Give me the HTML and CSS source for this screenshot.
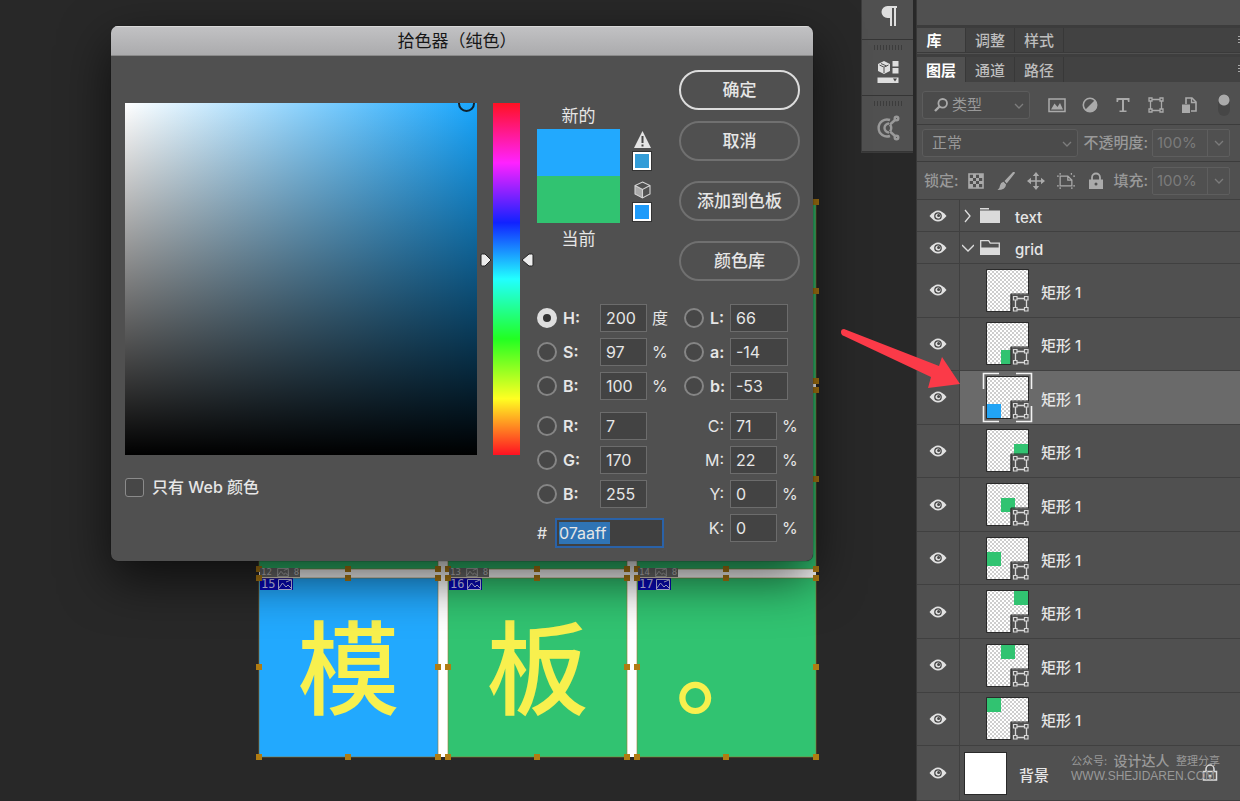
FILE: index.html
```html
<!DOCTYPE html>
<html lang="zh-CN">
<head>
<meta charset="utf-8">
<title>拾色器（纯色）</title>
<link rel="stylesheet" href="styles.css">
</head>
<body>
<svg class="defs" aria-hidden="true">
  <defs>
    <pattern id="checker" width="4" height="4" patternUnits="userSpaceOnUse">
      <rect width="4" height="4" fill="#fff"/><path d="M0 0h2v2H0zM2 2h2v2H2z" fill="#cdcdcd"/>
    </pattern>
    <symbol id="eye" viewBox="0 0 18 12">
      <path d="M.5 6Q5 .5 9 .5T17.500 6Q13 11.500 9 11.500T.5 6Z" fill="#e2e2e2"/>
      <circle cx="9" cy="6" r="3.200" fill="#e2e2e2" stroke="#484848" stroke-width="1.300"/><circle cx="9.600" cy="5.400" r="1.500" fill="#484848"/>
    </symbol>
    <symbol id="shape-thumb" viewBox="0 0 43 43">
      <path d="M24.500 43V25.500H43V43Z" fill="#505050"/>
      <path d="M.5 .5H42.500V25H25V42.500H.5Z" fill="none" stroke="#2a2a2a"/>
      <path d="M29.500 31v8M40.500 31v8M31 29.500h8M31 40.500h8" stroke="#d8d8d8" stroke-width="1.300"/>
      <path d="M27.500 27.500h3.500v3.500h-3.500zM38.500 27.500H42v3.500h-3.500zM27.500 38.500h3.500V42h-3.500zM38.500 38.500H42V42h-3.500z" fill="#505050" stroke="#d8d8d8" stroke-width="1.200"/>
    </symbol>
    <symbol id="down" viewBox="0 0 10 6"><path d="M1 1l4 4 4-4" fill="none" stroke="currentColor" stroke-width="1.300"/></symbol>
    <symbol id="handles" viewBox="-4 -4 187 187">
      <path d="M0 0H179V179H0Z" fill="none" stroke="#9a7a30" stroke-opacity=".6"/>
      <path d="M-3-3h6v6h-6zM86-3h6v6h-6zM176-3h6v6h-6zM-3 86h6v6h-6zM176 86h6v6h-6zM-3 176h6v6h-6zM86 176h6v6h-6zM176 176h6v6h-6z" fill="#b07c12"/>
    </symbol>
    <symbol id="slice" viewBox="0 0 14 11">
      <path d="M.5.5h13v10H.5zM1 9l3.500-5L8 8l2-2 3 3M8 3l5-2" fill="none" stroke="currentColor"/>
    </symbol>
  </defs>
</svg>

<main class="workspace">
  <div class="artboard">
    <div class="cell"><svg class="handles"><use href="#handles"/></svg></div>
    <div class="cell"><svg class="handles"><use href="#handles"/></svg></div>
    <div class="cell"><svg class="handles"><use href="#handles"/></svg></div>
    <div class="cell"><svg class="handles"><use href="#handles"/></svg></div>
    <div class="cell"><svg class="handles"><use href="#handles"/></svg></div>
    <div class="cell"><svg class="handles"><use href="#handles"/></svg></div>
    <div class="cell blue">模<span class="tag auto">12<svg><use href="#slice"/></svg>8</span><span class="tag">15<svg><use href="#slice"/></svg></span><svg class="handles"><use href="#handles"/></svg></div>
    <div class="cell">板<span class="tag auto">13<svg><use href="#slice"/></svg>8</span><span class="tag">16<svg><use href="#slice"/></svg></span><svg class="handles"><use href="#handles"/></svg></div>
    <div class="cell">。<span class="tag auto">14<svg><use href="#slice"/></svg>8</span><span class="tag">17<svg><use href="#slice"/></svg></span><svg class="handles"><use href="#handles"/></svg></div>
  </div>

  <form class="dialog" role="dialog" aria-labelledby="dlg-title">
    <h1 class="titlebar" id="dlg-title">拾色器（纯色）</h1>
    <div class="dialog-body">
      <div class="field-col">
        <div class="field"><span class="cursor"></span></div>
        <label class="web"><input type="checkbox"><span>只有 Web 颜色</span></label>
      </div>
      <div class="hue">
        <svg class="slider" viewBox="0 0 55 14">
          <path d="M2 2Q2 1 3.500 1H6L12 7 6 13H3.500Q2 13 2 12Z" fill="#ededed" stroke="#222"/>
          <path d="M54 2Q54 1 52.500 1H50L43 7 50 13H52.500Q54 13 54 12Z" fill="#ededed" stroke="#222"/>
        </svg>
      </div>
      <div class="controls">
        <div class="top">
          <div class="preview">
            <span>新的</span>
            <div class="swatches"><i class="new"></i><i class="cur"></i></div>
            <span>当前</span>
          </div>
          <div class="warnings">
            <svg class="warn" viewBox="0 0 17 17"><path d="M8.500 0L17 17H0Z" fill="#e4e4e4"/><path d="M8.500 5v7M8.500 13.500v2" stroke="#444" stroke-width="2"/></svg>
            <button type="button" class="chip gamut" aria-label="色域内颜色"></button>
            <svg class="cube" viewBox="0 0 17 18"><path d="M8.500 8.500L16 4.500V13L8.500 17Z" fill="#505050"/><path d="M1 4.500L8.500 8.500 16 4.500 8.500 1Z" fill="#505050"/><path d="M1 4.500L8.500 8.500V17L1 13Z" fill="#aaa"/><path d="M8.500 1L16 4.500V13L8.500 17 1 13V4.500ZM1 4.500L8.500 8.500 16 4.500M8.500 8.500V17" fill="none" stroke="#d4d4d4" stroke-width="1.100"/></svg>
            <button type="button" class="chip websafe" aria-label="Web 安全颜色"></button>
          </div>
          <div class="buttons">
            <button type="submit" class="pill primary">确定</button>
            <button type="button" class="pill">取消</button>
            <button type="button" class="pill far">添加到色板</button>
            <button type="button" class="pill far">颜色库</button>
          </div>
        </div>
        <div class="values">
          <div class="group">
            <div class="row"><label class="pick"><input type="radio" name="ch" checked>H:</label><input class="num" aria-label="H" value="200"><span>度</span></div>
            <div class="row"><label class="pick"><input type="radio" name="ch">S:</label><input class="num" aria-label="S" value="97"><span>%</span></div>
            <div class="row"><label class="pick"><input type="radio" name="ch">B:</label><input class="num" aria-label="B" value="100"><span>%</span></div>
            <div class="row split"><label class="pick"><input type="radio" name="ch">R:</label><input class="num" aria-label="R" value="7"></div>
            <div class="row"><label class="pick"><input type="radio" name="ch">G:</label><input class="num" aria-label="G" value="170"></div>
            <div class="row"><label class="pick"><input type="radio" name="ch">B:</label><input class="num" aria-label="B" value="255"></div>
            <div class="row hexrow"><label for="hex">#</label><div class="hexbox"><input id="hex" value="07aaff"></div></div>
          </div>
          <div class="group right">
            <div class="row"><label class="pick"><input type="radio" name="ch">L:</label><input class="num wide" aria-label="L" value="66"></div>
            <div class="row"><label class="pick"><input type="radio" name="ch">a:</label><input class="num wide" aria-label="a" value="-14"></div>
            <div class="row"><label class="pick"><input type="radio" name="ch">b:</label><input class="num wide" aria-label="b" value="-53"></div>
            <div class="row split"><label class="ink" for="c">C:</label><input class="num" id="c" value="71"><span>%</span></div>
            <div class="row"><label class="ink" for="m">M:</label><input class="num" id="m" value="22"><span>%</span></div>
            <div class="row"><label class="ink" for="y">Y:</label><input class="num" id="y" value="0"><span>%</span></div>
            <div class="row"><label class="ink" for="k">K:</label><input class="num" id="k" value="0"><span>%</span></div>
          </div>
        </div>
      </div>
    </div>
  </form>
</main>

<nav class="strip">
  <button class="tool first" aria-label="段落"><svg width="18" height="22" viewBox="0 0 18 22"><path d="M17 1H7.500a6 6 0 0 0 0 12H10V21h2V3h2V21h2V3h1z" fill="#dedede"/></svg></button>
  <button class="tool" aria-label="库"><i class="grip"></i><svg width="22" height="24" viewBox="0 0 22 24"><path d="M7 1l6 3v7l-6 3-6-3V4z" fill="#dedede"/><path d="M2.500 5L7 7.200 11.500 5M7 7.500V13M4 3.500L9.500 6" fill="none" stroke="#505050"/><path d="M15.500 1h6v5.500h-6zM15.500 8h6v5.500h-6zM.5 17.500h21V23H.5z" fill="#dedede"/><path d="M16 18.500h4l-2 3z" fill="#444"/></svg></button>
  <button class="tool" aria-label="扩展"><i class="grip"></i><svg width="24" height="26" viewBox="0 0 24 26" fill="none" stroke="#999" stroke-width="2.400"><path d="M14 5A8.500 8.500 0 1 0 14 21M13 8.500a4.500 4.500 0 1 0 0 9M14 9.500l5-4.500M14 16.500l5 4.500M14 9.500q2.500 3.500 0 7"/><circle cx="20.500" cy="3.500" r="1.800"/><circle cx="20.500" cy="22.500" r="1.800"/></svg></button>
</nav>

<aside class="panel">
  <div class="blank"></div>
  <div class="tabs"><button class="tab on">库</button><button class="tab">调整</button><button class="tab">样式</button><i class="menu"></i></div>
  <div class="tabs lower"><button class="tab on">图层</button><button class="tab">通道</button><button class="tab">路径</button><i class="menu"></i></div>
  <div class="bar filter">
    <div class="combo kind"><svg class="search" viewBox="0 0 14 14"><circle cx="8.700" cy="5.300" r="4.300" fill="none" stroke="#aaa" stroke-width="1.800"/><path d="M5.500 8.500L1 13" stroke="#aaa" stroke-width="2.400"/></svg><select aria-label="筛选"><option>类型</option></select><svg class="caret"><use href="#down"/></svg></div>
    <div class="filters">
      <button aria-label="像素图层"><svg viewBox="0 0 18 18"><path d="M1 3h16v12.500H1z" fill="none" stroke="#aaa" stroke-width="1.500"/><path d="M3 13.500l3.500-6 3 3.500L12 7l3 6.500z" fill="#aaa"/></svg></button>
      <button aria-label="调整图层"><svg viewBox="0 0 18 18"><circle cx="9" cy="9" r="6.700" fill="none" stroke="#aaa" stroke-width="1.600"/><path d="M14 4L4 14A7 7 0 1 0 14 4Z" fill="#aaa"/></svg></button>
      <button aria-label="文字图层"><svg viewBox="0 0 18 18"><path d="M2.500 2h13v4h-1.500L13.500 4H10v10.500h2.500V16h-7v-1.500H8V4H4.500L4 6H2.500z" fill="#aaa"/></svg></button>
      <button aria-label="形状图层"><svg viewBox="0 0 18 18" fill="none" stroke="#aaa" stroke-width="1.300"><path d="M3.500 5v8M14.500 5v8M5 3.500h8M5 14.500h8"/><path d="M2 2h3v3H2zM13 2h3v3h-3zM2 13h3v3H2zM13 13h3v3h-3z"/></svg></button>
      <button aria-label="智能对象"><svg viewBox="0 0 18 18"><path d="M6 8V2H12l4 4v9h-5" fill="none" stroke="#aaa" stroke-width="1.600"/><path d="M11.500 2v4.500H16" fill="none" stroke="#aaa" stroke-width="1.300"/><path d="M2 8.500h8V17H2z" fill="#aaa"/></svg></button>
    </div>
    <button class="toggle" aria-label="打开或关闭图层过滤"></button>
  </div>
  <div class="bar">
    <div class="combo blend dim"><select aria-label="混合模式"><option>正常</option></select><svg class="caret"><use href="#down"/></svg></div>
    <label class="caption" for="opacity">不透明度:</label>
    <div class="percent"><input id="opacity" value="100%"><button aria-label="不透明度滑块"><svg><use href="#down"/></svg></button></div>
  </div>
  <div class="bar lock">
    <span class="caption">锁定:</span>
    <div class="locks">
      <button aria-label="透明像素"><svg viewBox="0 0 18 18"><path d="M2 2h14v14H2z" fill="none" stroke="#aaa" stroke-width="1.600"/><path d="M6 2h3v4H6zM2 6h4v3H2zM9 6h3v3H9zM6 9h3v3H6zM12 2h4v4h-4zM12 9h4v3h-4zM2 12h4v4H2zM9 12h3v4H9z" fill="#aaa"/></svg></button>
      <button aria-label="图像像素"><svg viewBox="0 0 18 18"><path d="M17.500 0L16 0 7.500 9 9.700 11.500 18 1ZM6.500 9.800l2.600 2.600Q8.500 18 0.500 18 3 16 3 13.500 3.500 10.500 6.500 9.800Z" fill="#aaa"/></svg></button>
      <button aria-label="位置"><svg viewBox="0 0 18 18"><path d="M9 2v14M2 9h14" stroke="#aaa" stroke-width="1.600"/><path d="M9 0l3.200 4H5.800zM9 18l3.200-4H5.800zM0 9l4-3.200v6.400zM18 9l-4-3.200v6.400z" fill="#aaa"/></svg></button>
      <button aria-label="画板嵌套"><svg viewBox="0 0 20 18"><path d="M0 3.500h2M3.500 0v2M3.500 3.500v11h13V8L12 3.500zM12 3.500V8h4.500M16 0v2M18 3.500h2M0 14.500h2M3.500 16v2M16.500 16v2M18 14.500h2" fill="none" stroke="#aaa" stroke-width="1.400"/></svg></button>
      <button aria-label="全部锁定"><svg viewBox="0 0 18 18"><path d="M5 8V5.500a4 4 0 0 1 8 0V8" fill="none" stroke="#aaa" stroke-width="1.800"/><path d="M2 7.500h14V17H2z" fill="#aaa"/><circle cx="9" cy="12" r="1.500" fill="#505050"/></svg></button>
    </div>
    <label class="caption" for="fill">填充:</label>
    <div class="percent"><input id="fill" value="100%"><button aria-label="填充滑块"><svg><use href="#down"/></svg></button></div>
  </div>
  <ul class="layers">
    <li class="layer folder"><button class="vis" aria-label="可见"><svg><use href="#eye"/></svg></button><div class="info"><svg class="twist" viewBox="0 0 12 14"><path d="M3 1l5 6-5 6" fill="none" stroke="#ddd" stroke-width="1.300"/></svg><svg class="dir" viewBox="0 0 20 16"><path d="M0 0h9v1.500H0zM0 2.500h20V15H0z" fill="#dadada"/></svg><span>text</span></div></li>
    <li class="layer folder"><button class="vis" aria-label="可见"><svg><use href="#eye"/></svg></button><div class="info"><svg class="twist" viewBox="0 0 12 14"><path d="M0 4l6 6 6-6" fill="none" stroke="#ddd" stroke-width="1.300"/></svg><svg class="dir" viewBox="0 0 20 16"><path d="M.7 14V.7h8l1.500 2.500h9.100V14" fill="none" stroke="#dadada" stroke-width="1.300"/><path d="M0 7.500h20V15H0z" fill="#dadada"/></svg><span>grid</span></div></li>
    <li class="layer"><button class="vis" aria-label="可见"><svg><use href="#eye"/></svg></button><div class="info shape"><svg class="thumb" viewBox="0 0 43 43"><path d="M1 1h41v41H1z" fill="url(#checker)"/><use href="#shape-thumb"/></svg><span>矩形 1</span></div></li>
    <li class="layer"><button class="vis" aria-label="可见"><svg><use href="#eye"/></svg></button><div class="info shape"><svg class="thumb" viewBox="0 0 43 43"><path d="M1 1h41v41H1z" fill="url(#checker)"/><path d="M15 28h14v14H15z" fill="#31c371"/><use href="#shape-thumb"/></svg><span>矩形 1</span></div></li>
    <li class="layer selected"><button class="vis" aria-label="可见"><svg><use href="#eye"/></svg></button><div class="info shape"><svg class="thumb" viewBox="0 0 43 43"><path d="M1 1h41v41H1z" fill="url(#checker)"/><path d="M1 28h14v14H1z" fill="#22a4f5"/><use href="#shape-thumb"/><path d="M-2.500 13V-2.500H13M30-2.500H45.500V13M45.500 30V45.500H30M13 45.500H-2.500V30" fill="none" stroke="#f2f2f2" stroke-width="1.600"/></svg><span>矩形 1</span></div></li>
    <li class="layer"><button class="vis" aria-label="可见"><svg><use href="#eye"/></svg></button><div class="info shape"><svg class="thumb" viewBox="0 0 43 43"><path d="M1 1h41v41H1z" fill="url(#checker)"/><path d="M28 15h14v14H28z" fill="#31c371"/><use href="#shape-thumb"/></svg><span>矩形 1</span></div></li>
    <li class="layer"><button class="vis" aria-label="可见"><svg><use href="#eye"/></svg></button><div class="info shape"><svg class="thumb" viewBox="0 0 43 43"><path d="M1 1h41v41H1z" fill="url(#checker)"/><path d="M15 15h14v14H15z" fill="#31c371"/><use href="#shape-thumb"/></svg><span>矩形 1</span></div></li>
    <li class="layer"><button class="vis" aria-label="可见"><svg><use href="#eye"/></svg></button><div class="info shape"><svg class="thumb" viewBox="0 0 43 43"><path d="M1 1h41v41H1z" fill="url(#checker)"/><path d="M1 15h14v14H1z" fill="#31c371"/><use href="#shape-thumb"/></svg><span>矩形 1</span></div></li>
    <li class="layer"><button class="vis" aria-label="可见"><svg><use href="#eye"/></svg></button><div class="info shape"><svg class="thumb" viewBox="0 0 43 43"><path d="M1 1h41v41H1z" fill="url(#checker)"/><path d="M28 1h14v14H28z" fill="#31c371"/><use href="#shape-thumb"/></svg><span>矩形 1</span></div></li>
    <li class="layer"><button class="vis" aria-label="可见"><svg><use href="#eye"/></svg></button><div class="info shape"><svg class="thumb" viewBox="0 0 43 43"><path d="M1 1h41v41H1z" fill="url(#checker)"/><path d="M15 1h14v14H15z" fill="#31c371"/><use href="#shape-thumb"/></svg><span>矩形 1</span></div></li>
    <li class="layer"><button class="vis" aria-label="可见"><svg><use href="#eye"/></svg></button><div class="info shape"><svg class="thumb" viewBox="0 0 43 43"><path d="M1 1h41v41H1z" fill="url(#checker)"/><path d="M1 1h14v14H1z" fill="#31c371"/><use href="#shape-thumb"/></svg><span>矩形 1</span></div></li>
    <li class="layer base"><button class="vis" aria-label="可见"><svg><use href="#eye"/></svg></button><div class="info"><i class="white"></i><span>背景</span><svg class="padlock" viewBox="0 0 16 18"><path d="M4 7V5a4 4 0 0 1 8 0V7M1.500 7.500h13V16h-13z" fill="none" stroke="#ddd" stroke-width="1.500"/><circle cx="8" cy="12" r="1.500" fill="#ddd"/></svg></div></li>
  </ul>
</aside>

<svg class="pointer" viewBox="0 0 120 62"><path d="M4 0Q1 0 1 3T4 7L91 48 88 59 120 55 102 28 99 37Z" fill="#fb3a48"/></svg>
<div class="mark"><div class="mark-cn"><span>公众号:</span><b>设计达人</b><span>整理分享</span></div><div class="mark-url">WWW.SHEJIDAREN.COM</div></div>
</body>
</html>
```
FILE: styles.css
```css
* { box-sizing: border-box; }
body {
  margin: 0;
  min-height: 100vh;
  display: flex;
  align-items: stretch;
  position: relative;
  overflow: hidden;
  background: #282828;
  color: #e6e6e6;
  font: 15px/20px Inter, "Noto Sans CJK SC", sans-serif;
}
button, input, select { font: inherit; color: inherit; margin: 0; padding: 0; border: 0; background: none; border-radius: 0; }
button { display: grid; place-items: center; }
svg { display: block; }
.defs { position: absolute; width: 0; height: 0; }

/* canvas */
.workspace { flex: 1; position: relative; }
.artboard {
  position: absolute; left: 259px; top: 202px;
  display: grid; grid-template: repeat(3, 179px) / repeat(3, 179px); gap: 9px 10px;
  background: #fff;
}
.cell {
  position: relative; display: grid; place-items: center;
  padding-bottom: 10px;
  background: #31c371; color: #f8f04e;
  font: 500 102px/102px "Noto Sans CJK SC", sans-serif;
}
.blue { background: #22a9fe; }
.handles { position: absolute; left: -4px; top: -4px; width: 187px; height: 187px; }
.tag {
  position: absolute; left: 1px; top: 0;
  display: flex; align-items: center; gap: 3px;
  padding: 0 1px; height: 12px;
  background: #0808b8; color: #c8c8f4;
  font: 12px/12px "DejaVu Sans Mono", monospace;
}
.tag svg { width: 14px; height: 11px; }
.tag.auto { top: -10px; height: 9px; gap: 4px; background: #6c6c6c; color: #c4c4c4; font-size: 9px; line-height: 9px; }
.tag.auto svg { height: 9px; }

/* dialog */
.dialog {
  position: absolute; left: 111px; top: 26px; width: 702px;
  border-radius: 7px; overflow: hidden;
  background: #505050;
  box-shadow: 0 18px 50px rgba(0, 0, 0, .65), 0 0 1px #000;
  font-size: 17px;
}
.titlebar {
  margin: 0; height: 30px; padding-right: 10px;
  background: linear-gradient(#c2c2c4, #ababad); color: #161616;
  border-bottom: 1px solid #8a8a8a; box-shadow: inset 0 1px #d8d8d8;
  font-size: 17px; font-weight: 400; line-height: 31px; text-align: center;
}
.dialog-body { display: flex; padding: 14px 14px 13px; }
.field-col { flex: none; width: 352px; padding-top: 33px; margin-right: 16px; }
.field {
  position: relative; height: 352px; overflow: hidden;
  background: linear-gradient(to top, #000, transparent), linear-gradient(to right, #fff, #18a6fd);
}
.cursor { position: absolute; right: 2px; top: -8px; width: 17px; height: 17px; border: 2px solid #10222e; border-radius: 50%; }
.web { display: flex; align-items: center; gap: 8px; margin-top: 22px; width: max-content; font-weight: 500; font-size: 16px; }
.web input { appearance: none; width: 19px; height: 19px; border: 1px solid #8b8b8b; border-radius: 3px; background: #474747; }
.hue {
  flex: none; position: relative; width: 27px; height: 352px; margin: 33px 17px 0 0;
  background: linear-gradient(#f12, #f2f 17%, #12f 34%, #2ff 50%, #2f2 67%, #ff2 84%, #f12);
}
.slider { position: absolute; left: -14px; top: 150px; width: 55px; height: 14px; }
.controls { flex: 1; }
.top { display: flex; height: 212px; }
.preview { width: 83px; padding-top: 33px; text-align: center; line-height: 26px; display: flex; flex-direction: column; }
.swatches { display: grid; margin-bottom: 3px; }
.swatches i { height: 47px; }
.new { background: #22a9fe; }
.cur { background: #31c371; }
.warnings { width: 18px; margin: 61px 28px 0 13px; display: flex; flex-direction: column; align-items: center; }
.warn { width: 17px; height: 17px; }
.cube { width: 17px; height: 18px; margin-top: 11px; }
.chip { width: 18px; height: 18px; margin-top: 4px; border: 2px solid #fff; outline: 1px solid #333; }
.gamut { background: #349dd8; }
.websafe { background: #1e9bfa; }
.preview, .warnings, .buttons { flex: none; }
.buttons { width: 121px; }
.pill { width: 100%; height: 40px; margin-bottom: 11px; border: 2px solid #707070; border-radius: 20px; font-weight: 500; }
.pill.primary { border-color: #dcdcdc; }
.pill.far { margin-top: 20px; }
.values { display: flex; margin-top: 22px; font-size: 16px; }
.group { flex: none; width: 131px; display: flex; flex-direction: column; gap: 6px; }
.group.right { margin-left: 16px; }
.row { display: flex; align-items: center; height: 28px; }
.row.split { margin-top: 6px; }
.row > span { margin-left: 5px; }
.pick { flex: none; width: 63px; display: flex; align-items: center; gap: 6px; font-weight: 600; }
.right .pick { width: 46px; }
.pick input { appearance: none; margin: 0; width: 20px; height: 20px; border: 2px solid #858585; border-radius: 50%; background: #474747; }
.pick input:checked { border: 6px solid #dedede; background: #333; }
.num { flex: none; width: 47px; height: 28px; padding-left: 5px; border: 1px solid #6c6c6c; background: #434343; }
.num.wide { width: 58px; }
.ink { width: 46px; padding-right: 6px; text-align: right; }
.hexrow { height: 30px; margin-top: 4px; }
.hexrow label { width: 18px; }
.hexbox { flex: none; width: 109px; height: 30px; border: 2px solid #2a62a8; background: #404040; padding: 2px; display: flex; }
.hexbox input { width: 51px; background: #2f74b5; }

/* collapsed icon strip */
.strip { width: 52px; height: 153px; margin-right: 3px; border: solid #3b3b3b; border-width: 0 0 1px 1px; background: #505050; }
.tool { position: relative; width: 100%; height: 56px; border-bottom: 1px solid #353535; padding-top: 9px; }
.tool.first { height: 40px; padding: 0 0 8px 2px; }
.grip { position: absolute; top: 5px; left: 12px; width: 28px; height: 5px; background: repeating-linear-gradient(to right, #3c3c3c 0 1px, #505050 1px 3px); }

/* layers panel */
.panel { width: 324px; min-height: 100vh; border-left: 1px solid #383838; background: #505050; display: flex; flex-direction: column; }
.blank { height: 28px; border-bottom: 3px solid #3c3c3c; }
.tabs { display: flex; align-items: stretch; height: 25px; background: #424242; border-bottom: 1px solid #3a3a3a; position: relative; }
.lower { margin-top: 1px; height: 28px; border-top: 3px solid #3e3e3e; border-bottom: 0; }
.tab { width: 49px; padding-top: 2px; color: #bdbdbd; font-weight: 500; border-right: 1px solid #383838; }
.tab.on { background: #505050; color: #fff; font-weight: 700; }
.tabs:not(.lower) .on { padding-right: 14px; }
.menu { position: absolute; right: 0; top: 8px; width: 2px; height: 9px; background: repeating-linear-gradient(#aaa 0 1px, transparent 1px 3px); }
.bar { display: flex; align-items: center; height: 37px; padding: 0 10px 0 5px; border-bottom: 1px solid #3c3c3c; color: #999; }
.filter { height: 43px; padding-top: 3px; }
.lock { border-bottom: 0; padding-left: 7px; }
.combo { position: relative; display: flex; align-items: center; height: 28px; border: 1px solid #5c5c5c; border-radius: 3px; background: #4b4b4b; }
.combo select { appearance: none; flex: 1; height: 100%; padding-left: 4px; }
.kind { width: 108px; padding-left: 11px; }
.blend { width: 156px; padding-left: 5px; }
.search { width: 14px; height: 14px; }
.caret { position: absolute; right: 5px; top: 11px; width: 10px; height: 6px; color: #7d7d7d; }
.filters { flex: 1; display: flex; justify-content: space-between; padding: 0 20px 0 18px; }
.filters svg, .locks svg { width: 18px; height: 18px; }
.toggle { width: 12px; height: 22px; border-radius: 6px; background: radial-gradient(circle at 6px 6px, #aaa 5px, #464646 6px); }
.caption { font-weight: 500; margin-left: auto; padding-right: 4px; }
.lock .caption:first-child { margin: 0; padding-right: 8px; }
.percent { display: flex; width: 78px; height: 28px; border: 1px solid #5e5e5e; border-radius: 2px; color: #7b7b7b; }
.percent input { width: 55px; padding-left: 4px; border-right: 1px solid #5e5e5e; }
.percent button { flex: 1; }
.percent svg { width: 10px; height: 6px; }
.locks { flex: 1; display: flex; justify-content: space-between; padding-right: 8px; }
.layers { flex: 1; list-style: none; margin: 0; padding: 0; display: flex; flex-direction: column; border-top: 1px solid #3f3f3f; }
.layer { flex: 1; display: flex; border-bottom: 1px solid #404040; }
.layer.folder { flex: 0 0 32px; }
.layer.base { flex: 0 0 55px; }
.vis { width: 43px; border-right: 1px solid #404040; }
.vis svg { width: 18px; height: 12px; }
.info { flex: 1; display: flex; align-items: center; font-weight: 500; }
.info span { padding-top: 5px; }
.selected .info { background: #6a6a6a; }
.shape { padding-left: 26px; gap: 12px; }
.thumb { width: 43px; height: 43px; overflow: visible; }
.twist { width: 12px; height: 14px; margin: 0 6px 0 2px; }
.dir { width: 20px; height: 16px; margin-right: 15px; }
.white { width: 43px; height: 43px; margin: 0 12px 0 4px; background: #fff; border: 1px solid #2a2a2a; }
.padlock { width: 16px; height: 18px; margin: 0 22px 0 auto; }

/* annotations over the whole scene */
.pointer { position: absolute; left: 840px; top: 329px; width: 120px; height: 62px; }
.mark { position: absolute; right: 20px; bottom: 17px; width: 149px; color: #999; }
.mark-cn { display: flex; align-items: center; justify-content: space-between; font-size: 11px; line-height: 16px; }
.mark-cn b { font-size: 14px; font-weight: 500; }
.mark-url { font: 12px/15px "Liberation Sans", sans-serif; }
```
